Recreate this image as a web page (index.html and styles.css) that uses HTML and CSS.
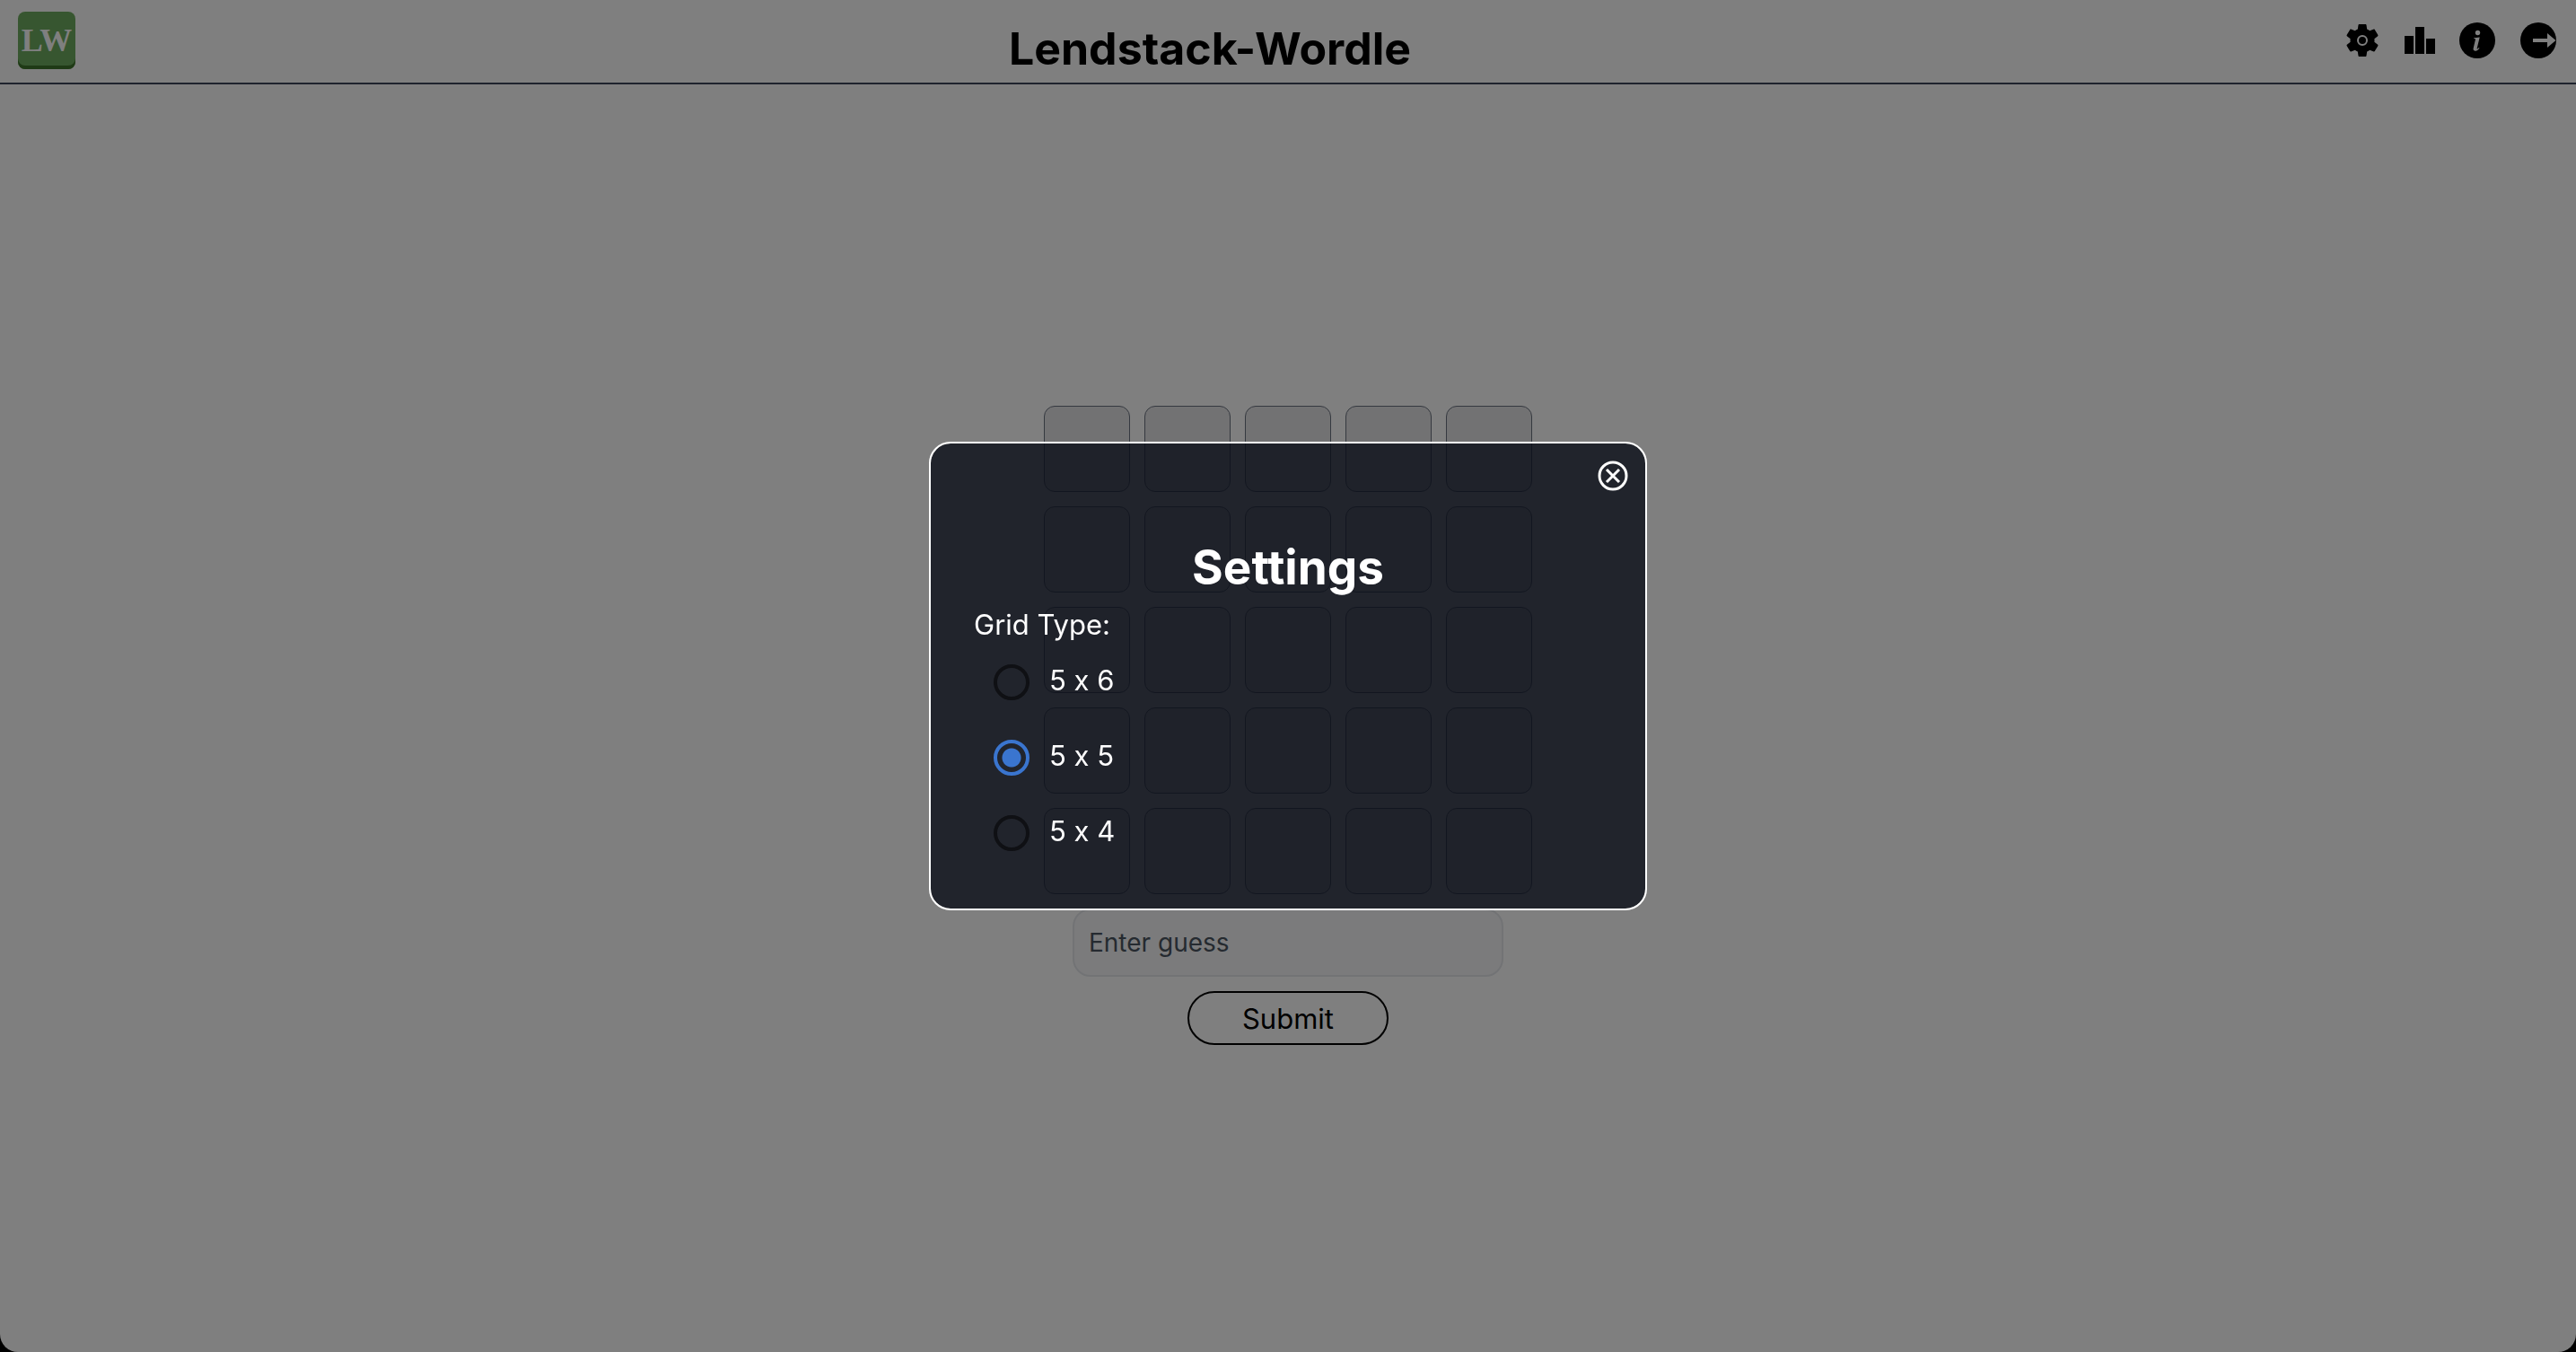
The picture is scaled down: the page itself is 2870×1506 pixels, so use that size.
FILE: index.html
```html
<!DOCTYPE html>
<html lang="en">
<head>
<meta charset="utf-8">
<meta name="viewport" content="width=device-width, initial-scale=1">
<title>Lendstack-Wordle</title>
<link rel="stylesheet" href="styles.css">
</head>
<body>
<div class="window">
  <header class="topbar">
    <a class="logo" href="#" aria-label="Lendstack home">LW</a>
    <h1 class="title">Lendstack-Wordle</h1>
    <nav class="actions" aria-label="Game menu">
      <button class="icon-btn" type="button" aria-label="Settings">
        <svg viewBox="0 0 40 40"><path transform="translate(-1.6 -1.6) scale(1.8)" d="M19.43 12.98c.04-.32.07-.64.07-.98s-.03-.66-.07-.98l2.110-1.650c.19-.15.24-.42.12-.64l-2-3.460c-.12-.22-.39-.3-.61-.22l-2.490 1c-.52-.4-1.080-.73-1.690-.98l-.38-2.650C14.460 2.180 14.250 2 14 2h-4c-.25 0-.46.18-.49.42l-.38 2.650c-.61.25-1.170.59-1.690.98l-2.490-1c-.23-.09-.49 0-.61.22l-2 3.460c-.13.22-.07.49.12.64l2.110 1.650c-.04.32-.07.65-.07.98s.03.66.07.98l-2.110 1.650c-.19.15-.24.42-.12.64l2 3.460c.12.22.39.3.61.22l2.490-1c.52.4 1.080.73 1.690.98l.38 2.650c.03.24.24.42.49.42h4c.25 0 .46-.18.49-.42l.38-2.650c.61-.25 1.170-.59 1.690-.98l2.490 1c.23.09.49 0 .61-.22l2-3.460c.12-.22.07-.49-.12-.64z"/><circle class="ring" cx="20" cy="20" r="5"/></svg>
      </button>
      <button class="icon-btn" type="button" aria-label="Statistics">
        <svg viewBox="0 0 40 40"><path d="M3 15h10v20H3zM15 5h10v30H15zM27 18h10v17H27z"/></svg>
      </button>
      <button class="icon-btn" type="button" aria-label="Information">
        <svg viewBox="0 0 40 40"><circle cx="20" cy="20" r="20"/><circle class="cut" cx="20.500" cy="11.500" r="2.700"/><path class="cut" d="M16.300 17.200l6.400-.7-3 12.300c-.2 1 .5 1 2-.8l.8.6c-1.800 2.600-3.300 3.300-4.900 3.100-1.800-.2-2.300-1.500-1.900-3.200l2.200-9.200c.2-.9-.4-1.200-1.800-1.200z"/></svg>
      </button>
      <button class="icon-btn logout" type="button" aria-label="Log out">
        <svg viewBox="0 0 40 40"><circle cx="20" cy="20" r="20"/><path class="cut" d="M14 18h16v-6l9.500 8-9.500 8v-6H14z"/></svg>
      </button>
    </nav>
  </header>

  <main class="game">
    <div class="grid" aria-label="Guess grid">
      <span class="cell"></span><span class="cell"></span><span class="cell"></span><span class="cell"></span><span class="cell"></span>
      <span class="cell"></span><span class="cell"></span><span class="cell"></span><span class="cell"></span><span class="cell"></span>
      <span class="cell"></span><span class="cell"></span><span class="cell"></span><span class="cell"></span><span class="cell"></span>
      <span class="cell"></span><span class="cell"></span><span class="cell"></span><span class="cell"></span><span class="cell"></span>
      <span class="cell"></span><span class="cell"></span><span class="cell"></span><span class="cell"></span><span class="cell"></span>
    </div>
    <form class="guess">
      <input class="guess-input" type="text" placeholder="Enter guess" aria-label="Enter guess">
      <button class="submit" type="button">Submit</button>
    </form>
  </main>
</div>

<div class="overlay">
  <section class="modal" role="dialog" aria-modal="true" aria-labelledby="settings-title">
    <button class="close" type="button" aria-label="Close">
      <svg viewBox="0 0 36 36"><circle cx="18" cy="18" r="15"/><path d="M11 11l14 14M25 11L11 25"/></svg>
    </button>
    <h2 class="modal-title" id="settings-title">Settings</h2>
    <fieldset class="options">
      <legend class="legend">Grid Type:</legend>
      <label class="option"><input class="radio" type="radio" name="grid"><span>5 x 6</span></label>
      <label class="option"><input class="radio" type="radio" name="grid" checked><span>5 x 5</span></label>
      <label class="option"><input class="radio" type="radio" name="grid"><span>5 x 4</span></label>
    </fieldset>
  </section>
</div>
</body>
</html>
```
FILE: styles.css
```css
* { box-sizing: border-box; }

html { background: #000; }

body {
  margin: 0;
  font-family: Inter, "Liberation Sans", sans-serif;
  font-variant-ligatures: no-contextual;
  color: #000;
}

button, input { font: inherit; color: inherit; }

.window {
  display: flex;
  flex-direction: column;
  min-height: 100vh;
  background: #fff;
  border-radius: 0 0 20px 20px;
}

.topbar {
  display: flex;
  align-items: flex-start;
  justify-content: space-between;
  height: 94px;
  padding: 13px 22px 0 20px;
  border-bottom: 2px solid #3e465c;
}

.logo {
  display: flex;
  align-items: center;
  justify-content: center;
  width: 64px;
  height: 64px;
  border-radius: 8px;
  background: #6fac60;
  box-shadow: inset 0 -4px #3f752c;
  color: #fff;
  font: bold 36px/64px "Liberation Serif", serif;
  text-decoration: none;
}

.title {
  margin: 8px 0 0;
  font-size: 50px;
  line-height: 66px;
  font-weight: 700;
}

.actions {
  display: flex;
  justify-content: flex-end;
  gap: 24px;
  padding-top: 12px;
}

.icon-btn {
  width: 40px;
  height: 40px;
  padding: 0;
  border: 0;
  background: none;
}

.logout { margin-left: 4px; }

.icon-btn svg, .close svg { display: block; width: 100%; height: 100%; }
.icon-btn .cut { fill: #fff; }
.icon-btn .ring { fill: none; stroke: #fff; stroke-width: 2; }

.game {
  flex: 1;
  display: flex;
  flex-direction: column;
  align-items: center;
  justify-content: center;
  gap: 16px;
  padding-top: 16px;
}

.grid {
  display: grid;
  grid-template-columns: repeat(5, 96px);
  grid-auto-rows: 96px;
  gap: 16px;
}

.cell {
  border: 1px solid #6b7280;
  border-radius: 12px;
  background: #e4e5e7;
}

.guess {
  display: flex;
  flex-direction: column;
  align-items: center;
  gap: 16px;
}

.guess-input {
  width: 480px;
  height: 76px;
  padding: 0 16px;
  border: 2px solid #e5e7eb;
  border-radius: 20px;
  background: #f6f6f9;
  font-size: 28px;
}

.guess-input::placeholder { color: #4a5560; opacity: 1; }

.submit {
  width: 224px;
  height: 60px;
  border: 2px solid #000;
  border-radius: 30px;
  background: none;
  font-size: 31px;
}

.overlay {
  position: fixed;
  inset: 0;
  display: flex;
  align-items: center;
  justify-content: center;
  background: rgba(0, 0, 0, 0.5);
}

.modal {
  display: flex;
  flex-direction: column;
  width: 800px;
  padding: 18px 18px 64px 48px;
  border: 2px solid #fff;
  border-radius: 24px;
  background: rgba(10, 14, 24, 0.8);
  background-clip: padding-box;
  color: #fff;
}

.close {
  align-self: flex-end;
  width: 36px;
  height: 36px;
  padding: 0;
  border: 0;
  background: none;
}

.close svg { fill: none; stroke: #fff; stroke-width: 3; }

.modal-title {
  margin: 52px 30px 0 0;
  font-size: 53px;
  line-height: 64px;
  font-weight: 700;
  text-align: center;
}

.options {
  display: flex;
  flex-direction: column;
  gap: 40px;
  margin: 12px 0 0;
  padding: 0;
  border: 0;
}

.legend {
  padding: 0;
  margin-bottom: 20px;
  font-size: 31px;
  line-height: 40px;
}

.option {
  display: flex;
  align-items: flex-end;
  gap: 22px;
  padding-left: 22px;
  font-size: 31px;
  line-height: 44px;
}

.radio {
  appearance: none;
  width: 40px;
  height: 40px;
  margin: 0;
  border: 4px solid #0f1014;
  border-radius: 50%;
}

.radio:checked {
  border-color: #3a75cf;
  background: radial-gradient(circle, #3a75cf 10px, transparent 11px);
}
```
